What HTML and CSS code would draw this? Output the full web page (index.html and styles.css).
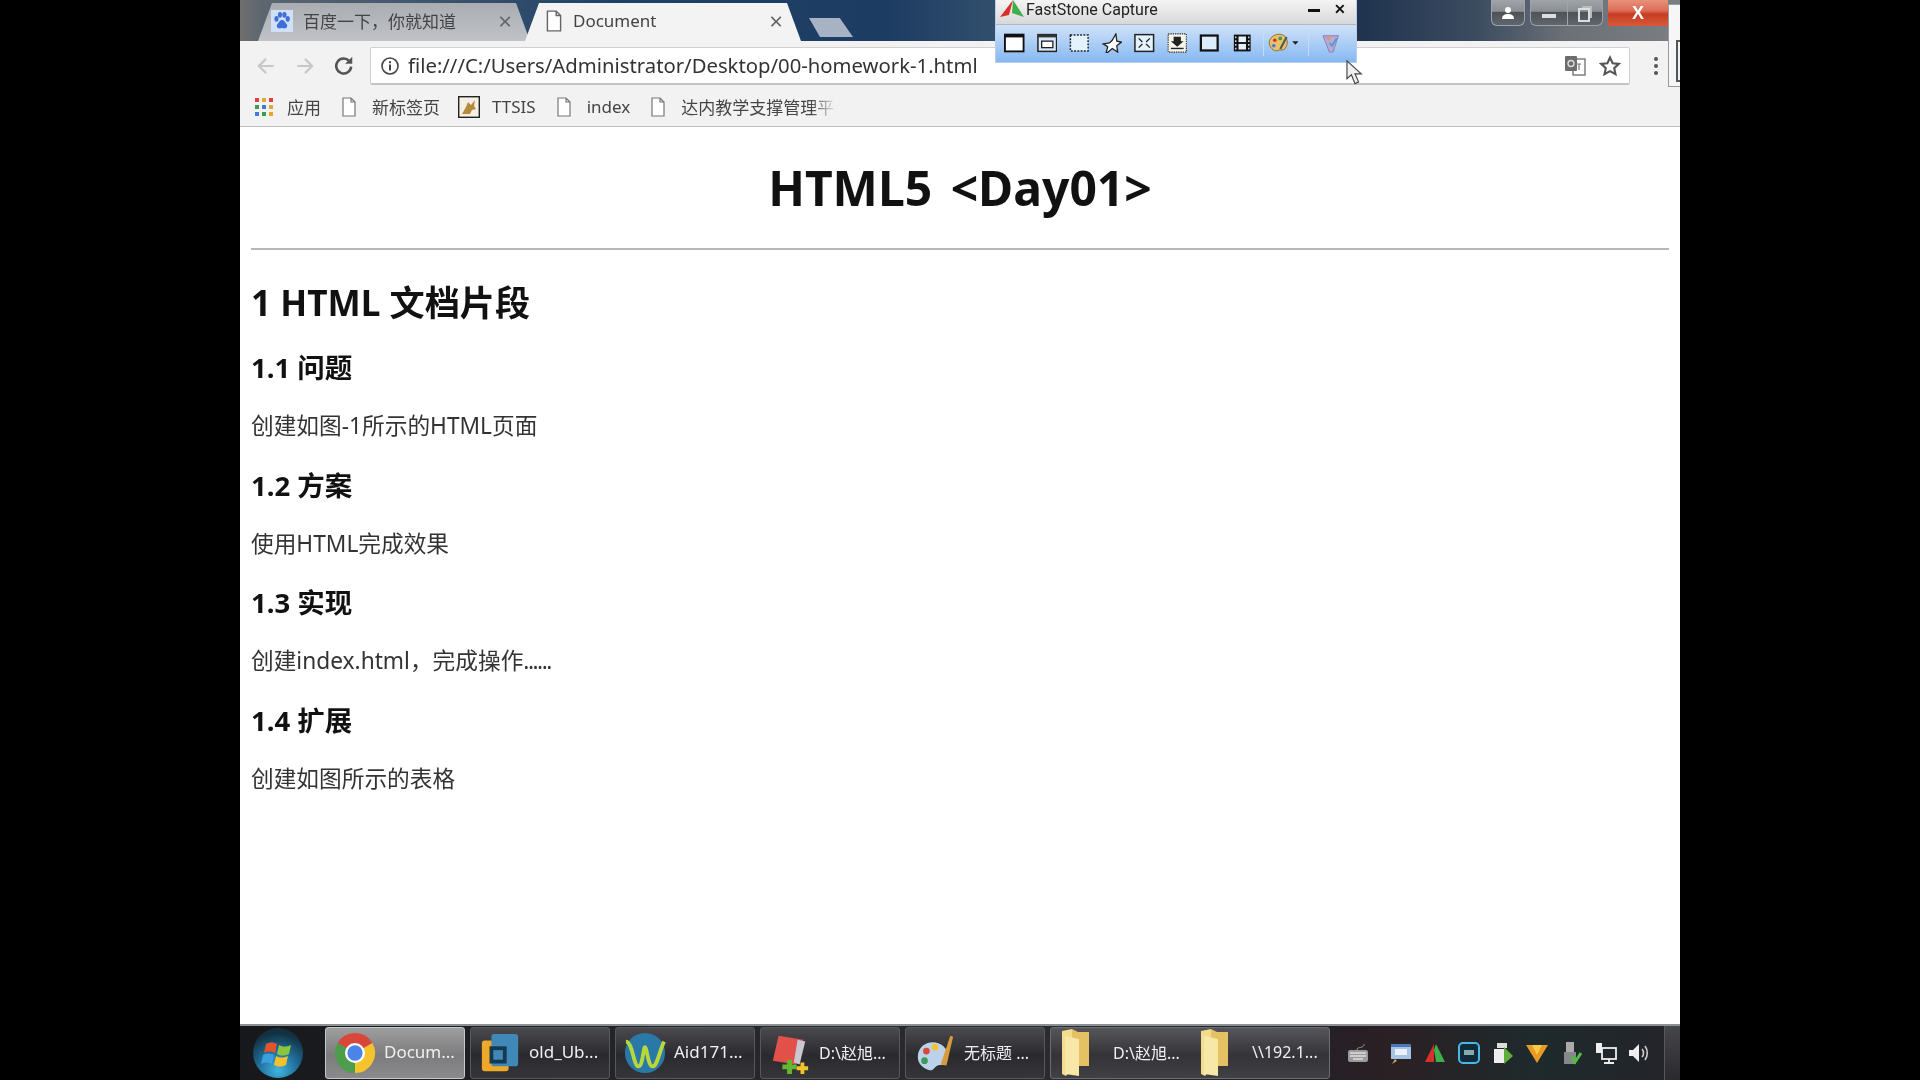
FILE: index.html
```html
<!DOCTYPE html>
<html lang="zh">
<head>
<meta charset="utf-8">
<title>Document</title>
<link rel="stylesheet" href="styles.css">
</head>
<body>
<div class="screen">
  <header class="tabstrip">
    <div class="tab tab-bg">
      <svg class="tab-ico" viewBox="0 0 20 20"><rect width="20" height="20" fill="#cfe0f8"/><g fill="#3f6fd8"><ellipse cx="5" cy="8" rx="1.9" ry="2.6"/><ellipse cx="8.2" cy="4.4" rx="1.9" ry="2.6"/><ellipse cx="12.2" cy="4.4" rx="1.9" ry="2.6"/><ellipse cx="15.2" cy="8" rx="1.9" ry="2.6"/><path d="M10 9c-2 0-2.500 2-4 3.500-1.500 1.500-.5 4.500 1.800 4.200 1-.1 1.500-.4 2.200-.4s1.200.3 2.200.4c2.300.3 3.300-2.700 1.800-4.200C12.500 11 12 9 10 9z"/></g></svg>
      <span class="tab-title">百度一下，你就知道</span>
      <span class="tab-x">×</span>
    </div>
    <div class="tab tab-on">
      <svg class="tab-ico" viewBox="0 0 16 20"><path d="M2 1h8l4 4v14H2z M10 1v4h4" fill="#fff" stroke="#666" stroke-width="1.300"/></svg>
      <span class="tab-title">Document</span>
      <span class="tab-x">×</span>
    </div>
    <div class="tab-new"></div>
  </header>

  <div class="winctl">
    <div class="ctl ctl-user"><svg viewBox="0 0 16 16" width="16" height="16"><circle cx="8" cy="5" r="3" fill="#fff"/><path d="M2 14c0-4 3-5 6-5s6 1 6 5z" fill="#fff"/></svg></div>
    <div class="ctl-group">
      <div class="ctl ctl-min"><span class="min-bar"></span></div>
      <div class="ctl ctl-max"><span class="max-box"></span></div>
    </div>
    <div class="ctl ctl-close">X</div>
  </div>
  <div class="edgewin"></div>

  <div class="toolbar">
    <svg class="nav" viewBox="0 0 20 20"><path d="M17 10H4M10 3.500 3.500 10l6.500 6.500" fill="none" stroke="#c8c8c8" stroke-width="2"/></svg>
    <svg class="nav" viewBox="0 0 20 20"><path d="M3 10h13M10 3.500l6.500 6.500-6.500 6.500" fill="none" stroke="#c8c8c8" stroke-width="2"/></svg>
    <svg class="nav" viewBox="0 0 20 20"><path d="M16.500 10.500a6.800 6.800 0 1 1-1.700-5" fill="none" stroke="#555" stroke-width="2.300"/><path d="M17.500 1.500v6.500H11z" fill="#555"/></svg>
    <div class="omnibox">
      <svg class="info" viewBox="0 0 20 20"><circle cx="10" cy="10" r="8" fill="none" stroke="#444" stroke-width="1.600"/><rect x="9" y="8.500" width="2" height="6" fill="#444"/><rect x="9" y="5.200" width="2" height="2" fill="#444"/></svg>
      <span class="url">file:///C:/Users/Administrator/Desktop/00-homework-1.html</span>
      <span class="omni-end">
        <svg class="omni-ico" viewBox="0 0 22 22"><rect x="9" y="4" width="12" height="16" fill="#fff" stroke="#777" stroke-width="1.400"/><rect x="1" y="1" width="12" height="15" rx="1" fill="#6d6d6d"/><circle cx="7" cy="8.500" r="3" fill="none" stroke="#ddd" stroke-width="1.400"/><path d="M13 9h4M15 9v6" stroke="#777" stroke-width="1.200"/></svg>
        <svg class="omni-ico" viewBox="0 0 22 22"><path d="M11 2.500l2.600 5.700 6.200.7-4.600 4.200 1.300 6.100-5.500-3.100-5.500 3.100 1.300-6.100L2.200 8.900l6.200-.7z" fill="#fff" stroke="#555" stroke-width="2.100"/></svg>
      </span>
    </div>
    <div class="dots"><i></i><i></i><i></i></div>
  </div>

  <nav class="bookmarks">
    <div class="bm">
      <svg class="bm-ico bm-apps" viewBox="0 0 18 18"><rect x="0" y="0" width="4" height="4" fill="#d9453c"/><rect x="7" y="0" width="4" height="4" fill="#e6a72e"/><rect x="14" y="0" width="4" height="4" fill="#d9453c"/><rect x="0" y="7" width="4" height="4" fill="#3b9b56"/><rect x="7" y="7" width="4" height="4" fill="#4479d8"/><rect x="14" y="7" width="4" height="4" fill="#e6a72e"/><rect x="0" y="14" width="4" height="4" fill="#4479d8"/><rect x="7" y="14" width="4" height="4" fill="#3b9b56"/><rect x="14" y="14" width="4" height="4" fill="#e6a72e"/></svg>
      <span>应用</span>
    </div>
    <div class="bm"><svg class="bm-ico" viewBox="0 0 16 20"><path d="M2 1h8l4 4v14H2z M10 1v4h4" fill="#fff" stroke="#777" stroke-width="1.200"/></svg><span>新标签页</span></div>
    <div class="bm"><svg class="bm-ico bm-ttsis" viewBox="0 0 22 22"><rect x=".7" y=".7" width="20.600" height="20.600" fill="#f5f0e4" stroke="#222" stroke-width="1.400"/><path d="M4 18l4-7 2-5 3 3 4-5-1 6 2 3-4 1-2 4z" fill="#b58a3c"/></svg><span>TTSIS</span></div>
    <div class="bm"><svg class="bm-ico" viewBox="0 0 16 20"><path d="M2 1h8l4 4v14H2z M10 1v4h4" fill="#fff" stroke="#777" stroke-width="1.200"/></svg><span>index</span></div>
    <div class="bm"><svg class="bm-ico" viewBox="0 0 16 20"><path d="M2 1h8l4 4v14H2z M10 1v4h4" fill="#fff" stroke="#777" stroke-width="1.200"/></svg><span class="bm-fade">达内教学支撑管理平</span></div>
  </nav>

  <main class="page">
    <h1 class="doc-title">HTML5 &lt;Day01&gt;</h1>
    <hr class="rule">
    <h2 class="sec">1 HTML 文档片段</h2>
    <h3 class="sub">1.1 问题</h3>
    <p class="para">创建如图-1所示的HTML页面</p>
    <h3 class="sub">1.2 方案</h3>
    <p class="para">使用HTML完成效果</p>
    <h3 class="sub">1.3 实现</h3>
    <p class="para">创建index.html，完成操作<span class="tight">......</span></p>
    <h3 class="sub">1.4 扩展</h3>
    <p class="para">创建如图所示的表格</p>
  </main>

  <footer class="taskbar">
    <div class="start">
      <svg viewBox="0 0 52 52" width="52" height="52"><defs><radialGradient id="orb" cx="50%" cy="85%" r="75%"><stop offset="0" stop-color="#3fb4e0"/><stop offset=".55" stop-color="#1f6a96"/><stop offset="1" stop-color="#12303f"/></radialGradient></defs><circle cx="26" cy="26" r="25" fill="url(#orb)"/><path d="M14 17c4-2 7-2 11 0l-2 9c-4-2-7-2-11 0z" fill="#e2552c"/><path d="M27 18c4 2 7 2 12 0l-2 9c-5 2-8 2-12 0z" fill="#8cc63f"/><path d="M11 28c4-2 7-2 11 0l-2 9c-4-2-7-2-11 0z" fill="#3aa0dc"/><path d="M24 29c4 2 7 2 12 0l-2 9c-5 2-8 2-12 0z" fill="#f5c02c"/></svg>
    </div>
    <div class="task task-on">
      <svg class="task-ico" viewBox="0 0 44 44"><path d="M22 22 3.800 11.500A21 21 0 0 1 40.200 11.500z" fill="#d9463a"/><path d="M22 22 40.200 11.500A21 21 0 0 1 22 43z" fill="#f4c32d"/><path d="M22 22 22 43A21 21 0 0 1 3.800 11.500z" fill="#4c9e4d"/><circle cx="22" cy="22" r="10.500" fill="#fff"/><circle cx="22" cy="22" r="8" fill="#4c83e6"/></svg>
      <span>Docum...</span>
    </div>
    <div class="task">
      <svg class="task-ico" viewBox="0 0 44 44"><rect x="3" y="9" width="28" height="32" rx="3" fill="#f0a828"/><rect x="13" y="2" width="28" height="34" rx="3" fill="#3f88b8"/><rect x="11" y="15" width="18" height="18" fill="#17394f"/><rect x="15" y="19" width="10" height="10" fill="#3f88b8"/></svg>
      <span>old_Ub...</span>
    </div>
    <div class="task">
      <svg class="task-ico" viewBox="0 0 44 44"><circle cx="22" cy="22" r="21" fill="#2a78a8"/><path d="M2 10c7 0 8 26 13 26s5-20 7-20 3 20 8 20 7-16 12-26" fill="none" stroke="#b8d83a" stroke-width="4"/></svg>
      <span>Aid171...</span>
    </div>
    <div class="task">
      <svg class="task-ico" viewBox="0 0 44 44"><path d="M10 4l26 4-8 26-24-4z" fill="#e2504a"/><path d="M30 8l8 2-6 24-6-2z" fill="#c8c8d0"/><path d="M14 34h5v-5h5v5h5v5h-5v5h-5v-5h-5z" fill="#62b82e"/><path d="M29 36h4v-4h4v4h4v4h-4v4h-4v-4h-4z" fill="#f2c42c"/></svg>
      <span class="tx-sm">D:\赵旭...</span>
    </div>
    <div class="task">
      <svg class="task-ico" viewBox="0 0 44 44"><path d="M4 26C4 14 16 8 26 12c8 3 12 12 8 20-2 4-6 2-9 3-4 1-4 6-9 5-7-2-12-7-12-14z" fill="#bcd2ea"/><circle cx="13" cy="20" r="3.500" fill="#d9463a"/><circle cx="22" cy="16" r="3.500" fill="#f4c32d"/><circle cx="11" cy="30" r="3.500" fill="#3b9b56"/><path d="M28 34 38 4l3 1-7 30z" fill="#d99a3c"/></svg>
      <span class="tx-sm">无标题 ...</span>
    </div>
    <div class="task-group">
      <div class="task-half">
        <svg class="folder" viewBox="0 0 30 50"><path d="M1 3l10-2v40L5 48 1 46z" fill="#f4dc8c"/><path d="M11 1l6 3h11v34H11z" fill="#e4c263"/><path d="M4 8l14 3v37l-14-2z" fill="#f8e8a8"/></svg>
        <span class="tx-sm">D:\赵旭...</span>
      </div>
      <div class="task-half">
        <svg class="folder" viewBox="0 0 30 50"><path d="M1 3l10-2v40L5 48 1 46z" fill="#f4dc8c"/><path d="M11 1l6 3h11v34H11z" fill="#e4c263"/><path d="M4 8l14 3v37l-14-2z" fill="#f8e8a8"/></svg>
        <span class="tx-sm">\\192.1...</span>
      </div>
    </div>
    <div class="tray">
      <svg class="tray-ico tray-first" viewBox="0 0 24 24"><rect x="2" y="9" width="20" height="12" rx="2" fill="#9a9a9a"/><path d="M4 12h16M4 15h16M7 18h10" stroke="#e0e0e0" stroke-width="1.300"/><path d="M11 9c0-3 3-2 5-3s2-2 2-3" fill="none" stroke="#9a9a9a"/></svg>
      <svg class="tray-ico" viewBox="0 0 24 24"><rect x="2" y="3" width="20" height="15" fill="#a8c4e4"/><rect x="2" y="3" width="20" height="3" fill="#4a78b8"/><rect x="6" y="8" width="12" height="6" fill="#eef"/><path d="M6 18l-3 5 5-3z" fill="#caa070"/></svg>
      <svg class="tray-ico" viewBox="0 0 24 24"><path d="M11 3 2 21h9z" fill="#d9302c"/><path d="M11 9l2-6 9 18h-9z" fill="#3fae4c"/></svg>
      <svg class="tray-ico" viewBox="0 0 24 24"><rect x="2" y="2" width="20" height="20" rx="4" fill="#0e2c3c" stroke="#4cb6e4" stroke-width="2"/><rect x="7" y="9" width="10" height="5" fill="#8aa"/></svg>
      <svg class="tray-ico" viewBox="0 0 24 24"><rect x="6" y="2" width="10" height="5" fill="#ddd"/><rect x="3" y="8" width="10" height="14" fill="#eee"/><path d="M13 6l9 9-9 8z" fill="#5fae3c"/></svg>
      <svg class="tray-ico" viewBox="0 0 24 24"><path d="M1 4h22L12 22z" fill="#e89a22"/><path d="M7 4h10l-5 10z" fill="#f8c848"/></svg>
      <svg class="tray-ico" viewBox="0 0 24 24"><rect x="7" y="1" width="8" height="12" fill="#aaa"/><rect x="5" y="11" width="12" height="12" fill="#888"/><path d="M13 16l3 5 6-9" fill="none" stroke="#4cc23c" stroke-width="3"/></svg>
      <svg class="tray-ico" viewBox="0 0 24 24"><rect x="9" y="7" width="14" height="11" fill="none" stroke="#eee" stroke-width="1.800"/><rect x="3" y="2" width="6" height="10" fill="#eee"/><path d="M16 18v4M11 22h10" stroke="#eee" stroke-width="1.800"/></svg>
      <svg class="tray-ico" viewBox="0 0 24 24"><path d="M2 9h4l6-6v18l-6-6H2z" fill="#eee"/><path d="M15 8c2 2 2 6 0 8M18 5c3 4 3 10 0 14" fill="none" stroke="#ccc" stroke-width="1.600"/></svg>
    </div>
    <div class="show-desk"></div>
  </footer>

  <aside class="capture">
    <div class="cap-title">
      <svg class="cap-logo" viewBox="0 0 24 17"><path d="M13 0 0 17l9-2z" fill="#d9302c"/><path d="M13 0 24 17l-12-4z" fill="#3fae4c"/></svg>
      <span class="cap-name">FastStone Capture</span>
      <span class="cap-min"></span>
      <span class="cap-close">✕</span>
    </div>
    <div class="cap-tools">
      <svg class="cap-ico" viewBox="0 0 22 20"><rect x="1" y="1" width="20" height="18" fill="#fff" stroke="#111" stroke-width="2"/><rect x="1" y="1" width="20" height="3" fill="#111"/></svg>
      <svg class="cap-ico" viewBox="0 0 22 20"><rect x="1" y="1" width="20" height="18" fill="#dbe9fa" stroke="#222" stroke-width="1.600"/><rect x="1" y="1" width="20" height="3" fill="#333"/><rect x="5" y="8" width="12" height="7" fill="#fff" stroke="#222" stroke-width="1.400"/></svg>
      <svg class="cap-ico" viewBox="0 0 22 20"><rect x="1.500" y="1.500" width="19" height="17" fill="#e4f2fc" stroke="#222" stroke-width="1.600" stroke-dasharray="2 1.500"/></svg>
      <svg class="cap-ico" viewBox="0 0 22 22"><path d="M11 8 15 1l1 8 5 1-5 4 1 7-6-4-7 6 2-8-5-3 7-1z" fill="#fff" stroke="#222" stroke-width="1.400"/></svg>
      <svg class="cap-ico" viewBox="0 0 22 20"><rect x="1" y="1" width="20" height="18" fill="#e4f2fc" stroke="#222" stroke-width="1.600"/><path d="M5 5l4 4M17 5l-4 4M5 15l4-4M17 15l-4-4" stroke="#222" stroke-width="1.400"/></svg>
      <svg class="cap-ico" viewBox="0 0 22 22"><rect x="1" y="1" width="20" height="20" fill="#f4f4e8" stroke="#333" stroke-width="1.200" stroke-dasharray="1.500 1"/><path d="M7 4h8v5h3l-7 6-7-6h3z" fill="#222"/><path d="M4 17h14" stroke="#222" stroke-width="1.500"/></svg>
      <svg class="cap-ico" viewBox="0 0 22 20"><rect x="2" y="2" width="18" height="16" fill="#dcecfb" stroke="#111" stroke-width="2.400"/></svg>
      <svg class="cap-ico" viewBox="0 0 22 20"><rect x="2" y="1" width="18" height="18" fill="#111"/><rect x="7" y="3" width="8" height="6" fill="#e4f2fc"/><rect x="7" y="11" width="8" height="6" fill="#e4f2fc"/><path d="M4 3v14M18 3v14" stroke="#ddd" stroke-width="1.500" stroke-dasharray="2 2"/></svg>
      <span class="cap-sep"></span>
      <svg class="cap-ico cap-wide" viewBox="0 0 34 24"><path d="M2 12C2 5 10 1 16 3c6 2 7 9 4 14-2 4-5 2-8 3-3 2-9-1-10-8z" fill="#e8c26a" stroke="#8a6a2a"/><circle cx="8" cy="9" r="2" fill="#d9302c"/><circle cx="14" cy="7" r="2" fill="#3b9b56"/><circle cx="7" cy="15" r="2" fill="#4479d8"/><path d="M13 18l7-13 2 1-7 13z" fill="#555"/><path d="M27 10h7l-3.500 4z" fill="#222"/></svg>
      <span class="cap-sep"></span>
      <svg class="cap-ico" viewBox="0 0 22 22"><path d="M3 3h17l-6 18h-4z" fill="#b8a8d8" stroke="#8a7ab4"/><path d="M5 4h7l-2 5z" fill="#d89a7a"/><path d="M10 11l3 3 5-8" fill="none" stroke="#5a9cc8" stroke-width="2"/></svg>
    </div>
  </aside>

  <svg class="cursor" viewBox="0 0 20 28"><path d="M1 1v20l5-4.500 4 10 4-2-4-9h7z" fill="#f0f0f0" stroke="#444" stroke-width="1.300"/></svg>
</div>
</body>
</html>
```

FILE: styles.css
```css
* { box-sizing: border-box; }
html, body { margin: 0; height: 100%; background: #000; overflow: hidden; }
body { font-family: "Noto Sans", "Noto Sans CJK SC", sans-serif; }

.screen {
  position: relative;
  width: 1440px;
  height: 1080px;
  margin: 0 auto;
  display: flex;
  flex-direction: column;
  background: #fff;
  overflow: hidden;
  filter: blur(.4px);
}

/* tab strip */
.tabstrip {
  height: 41px;
  flex: none;
  display: flex;
  align-items: flex-end;
  padding-left: 18px;
  background: linear-gradient(90deg, #6f6f6f 0, #5c6670 1.500%, #1f4168 26%, #1d3c62 45%, #33506e 53%, #21456f 62%, #2d4b6d 68%, #20344f 78%, #3c4c60 86%, #6b7076 92%, #7b7f84 100%);
}
.tab {
  height: 38px;
  display: flex;
  align-items: center;
  padding-bottom: 3px;
  clip-path: polygon(14px 0, calc(100% - 14px) 0, 100% 100%, 0 100%);
  font-size: 17px;
}
.tab-bg {
  width: 272px;
  padding-left: 13px;
  padding-right: 18px;
  background: linear-gradient(#a9adb2, #c0c2c6);
  color: #444;
}
.tab-bg .tab-title { margin-left: 10px; }
.tab-on {
  width: 276px;
  margin-left: -5px;
  padding-left: 18px;
  padding-right: 18px;
  background: #f3f3f4;
  color: #444;
}
.tab-ico { width: 22px; height: 22px; flex: none; }
.tab-title { margin-left: 8px; flex: 1; white-space: nowrap; }
.tab-x { font-size: 24px; line-height: 1; color: #666; }
.tab-new {
  width: 44px;
  height: 19px;
  margin: 0 0 4px 8px;
  background: #a7b3c4;
  clip-path: polygon(0 0, 70% 0, 100% 100%, 25% 100%);
}

/* window buttons */
.winctl {
  position: absolute;
  top: 0;
  right: 12px;
  display: flex;
  gap: 5px;
  height: 26px;
}
.ctl {
  display: flex;
  align-items: center;
  justify-content: center;
  height: 26px;
  color: #fff;
}
.ctl-user, .ctl-group {
  display: flex;
  border: 1px solid #9aa3ad;
  border-top: 0;
  border-radius: 0 0 6px 6px;
  background: linear-gradient(#a0a4a8 0, #8b8f93 45%, #4e5359 50%, #60666c 100%);
}
.ctl-user { width: 34px; }
.ctl-min { width: 37px; border-right: 1px solid #a0a5aa; }
.ctl-max { width: 34px; }
.min-bar { width: 14px; height: 4px; background: #ddd; margin-top: 6px; }
.max-box { width: 12px; height: 14px; border: 2px solid #ddd; margin: 3px 3px 0 0; box-shadow: 3px -3px 0 -1px #bbb; }
.ctl-close {
  width: 60px;
  font: bold 18px "Liberation Sans", sans-serif;
  background: linear-gradient(#e8917a 0, #dc6e58 40%, #c63c22 55%, #d85a3a 100%);
}
.edgewin {
  position: absolute;
  top: 4px;
  right: 0;
  width: 12px;
  height: 83px;
  background: #f6f6f6;
  border: 1px solid #9a9a9a;
  border-right: 0;
}
.edgewin::after {
  content: "";
  position: absolute;
  left: 7px;
  right: 0;
  top: 35px;
  height: 38px;
  background: #eef1f4;
  border: 2px solid #555;
  border-right: 0;
}

/* toolbar */
.toolbar {
  height: 46px;
  flex: none;
  display: flex;
  align-items: center;
  padding: 4px 0 0 15px;
  background: #f2f2f3;
}
.nav { width: 22px; height: 22px; flex: none; margin-right: 17px; }
.omnibox {
  width: 1260px;
  height: 38px;
  margin-left: -2px;
  display: flex;
  align-items: center;
  flex: none;
  padding: 0 8px 0 9px;
  background: #fff;
  border: 1px solid #d0d0d2;
  border-bottom: 2px solid #c4c4c6;
  border-radius: 2px;
}
.info { width: 20px; height: 20px; flex: none; }
.url { margin-left: 8px; padding-bottom: 2px; font-size: 20.300px; color: #333; white-space: nowrap; flex: 1; }
.omni-end { display: flex; align-items: center; gap: 13px; }
.omni-ico { width: 22px; height: 22px; }
.dots { display: flex; flex-direction: column; gap: 3px; margin-left: 24px; }
.dots i { display: block; width: 4px; height: 4px; border-radius: 50%; background: #555; }

/* bookmarks */
.bookmarks {
  height: 40px;
  flex: none;
  display: flex;
  align-items: center;
  gap: 20px;
  padding-left: 15px;
  background: #f2f2f3;
  border-bottom: 1px solid #bdbdc0;
  font-size: 17px;
  color: #444;
}
.bm { display: flex; align-items: center; gap: 15px; white-space: nowrap; }
.bm-ico { width: 16px; height: 20px; flex: none; }
.bm-apps { width: 18px; height: 18px; margin-right: -1px; }
.bm-ttsis { width: 22px; height: 22px; margin: 0 -3px 0 -2px; }
.bm-fade {
  background: linear-gradient(90deg, #444 85%, #ddd 100%);
  -webkit-background-clip: text;
  background-clip: text;
  color: transparent;
}

/* page */
.page {
  flex: 1;
  padding: 37px 11px 0;
  background: #fff;
  color: #111;
  overflow: hidden;
}
.doc-title {
  margin: 0;
  font-size: 48px;
  line-height: 48px;
  font-weight: 700;
  word-spacing: 6px;
  text-align: center;
}
.rule { margin: 36px 0 0; border: 0; border-top: 2px solid #b8b8bc; }
.sec { margin: 34px 0 34px; font-size: 35.200px; line-height: 36px; font-weight: 700; }
.sub { margin: 0 0 32px; font-size: 27.500px; line-height: 28px; font-weight: 700; }
.para { margin: 0 0 33.600px; font-size: 22.700px; line-height: 24px; color: #333; }
.tight { letter-spacing: -1.500px; }

/* taskbar */
.taskbar {
  height: 56px;
  flex: none;
  display: flex;
  align-items: center;
  gap: 5px;
  padding-left: 16px;
  border-top: 2px solid #8d9094;
  background: linear-gradient(90deg, #17181c 0, #26262a 30%, #2c2c30 60%, #222028 72%, #2b2024 80%, #1e2a2c 90%, #24242a 100%);
  color: #f0f0f0;
  font-size: 17px;
}
.start { width: 60px; display: flex; justify-content: center; flex: none; margin-right: 12px; margin-left: -8px; }
.task, .task-half {
  display: flex;
  align-items: center;
  gap: 8px;
  white-space: nowrap;
}
.task span, .task-half span { padding-bottom: 3px; }
.task {
  width: 140px;
  height: 52px;
  padding-left: 8px;
  border: 1px solid #55585c;
  border-radius: 3px;
  background: linear-gradient(#4a4a4e, #2a2a2e 55%, #36363a);
  flex: none;
}
.task-on { background: linear-gradient(#9e9e9e, #7c7c7e 55%, #8a8a8c); border-color: #c8c8cc; }
.task-ico { width: 42px; height: 42px; flex: none; }
.tx-sm { font-size: 16px; }
.task-group {
  width: 280px;
  height: 52px;
  display: flex;
  flex: none;
  border: 1px solid #6a6d71;
  border-radius: 3px;
  background: linear-gradient(#55555a, #343438 55%, #404045);
}
.task-half { width: 140px; padding-left: 10px; gap: 22px; }
.folder { width: 30px; height: 50px; flex: none; }
.tray {
  margin-left: 11px;
  display: flex;
  align-items: center;
  gap: 10px;
  flex: 1;
}
.tray-ico { width: 24px; height: 24px; flex: none; }
.tray-first { margin-right: 9px; }
.show-desk { width: 16px; height: 54px; flex: none; background: linear-gradient(#47474b, #2a2a2e); border-left: 1px solid #55585c; }

/* capture floating window */
.capture {
  position: absolute;
  left: 755px;
  top: 0;
  width: 362px;
  height: 63px;
  display: flex;
  flex-direction: column;
  border: 1px solid #b9cde8;
  border-top: 0;
}
.cap-title {
  height: 24px;
  flex: none;
  display: flex;
  align-items: flex-start;
  padding: 0 6px 0 4px;
  background: linear-gradient(#f4f4f4, #d8d8da);
  font: 16px/19px Roboto, sans-serif;
  color: #222;
}
.cap-logo { width: 24px; height: 17px; flex: none; }
.cap-name { margin-left: 2px; flex: 1; }
.cap-min { width: 12px; height: 3px; background: #111; margin: 9px 14px 0 0; }
.cap-close { font-size: 14px; font-weight: 700; color: #111; width: 16px; }
.cap-tools {
  flex: 1;
  display: flex;
  align-items: center;
  gap: 12px;
  padding: 0 8px 2px 8px;
  background: linear-gradient(#d0e2f8, #86b8f2);
  border-top: 1px solid #aeb9c8;
}
.cap-ico { width: 20.500px; height: 20px; flex: none; }
.cap-wide { width: 32px; height: 22px; margin-left: -8px; }
.cap-sep { width: 1px; height: 26px; background: #c4dbf6; margin: 0 -1px; flex: none; }
.cap-wide + .cap-sep { margin-left: -3px; margin-right: -1px; }

.cursor {
  position: absolute;
  left: 1106px;
  top: 60px;
  width: 18px;
  height: 25px;
}
```
